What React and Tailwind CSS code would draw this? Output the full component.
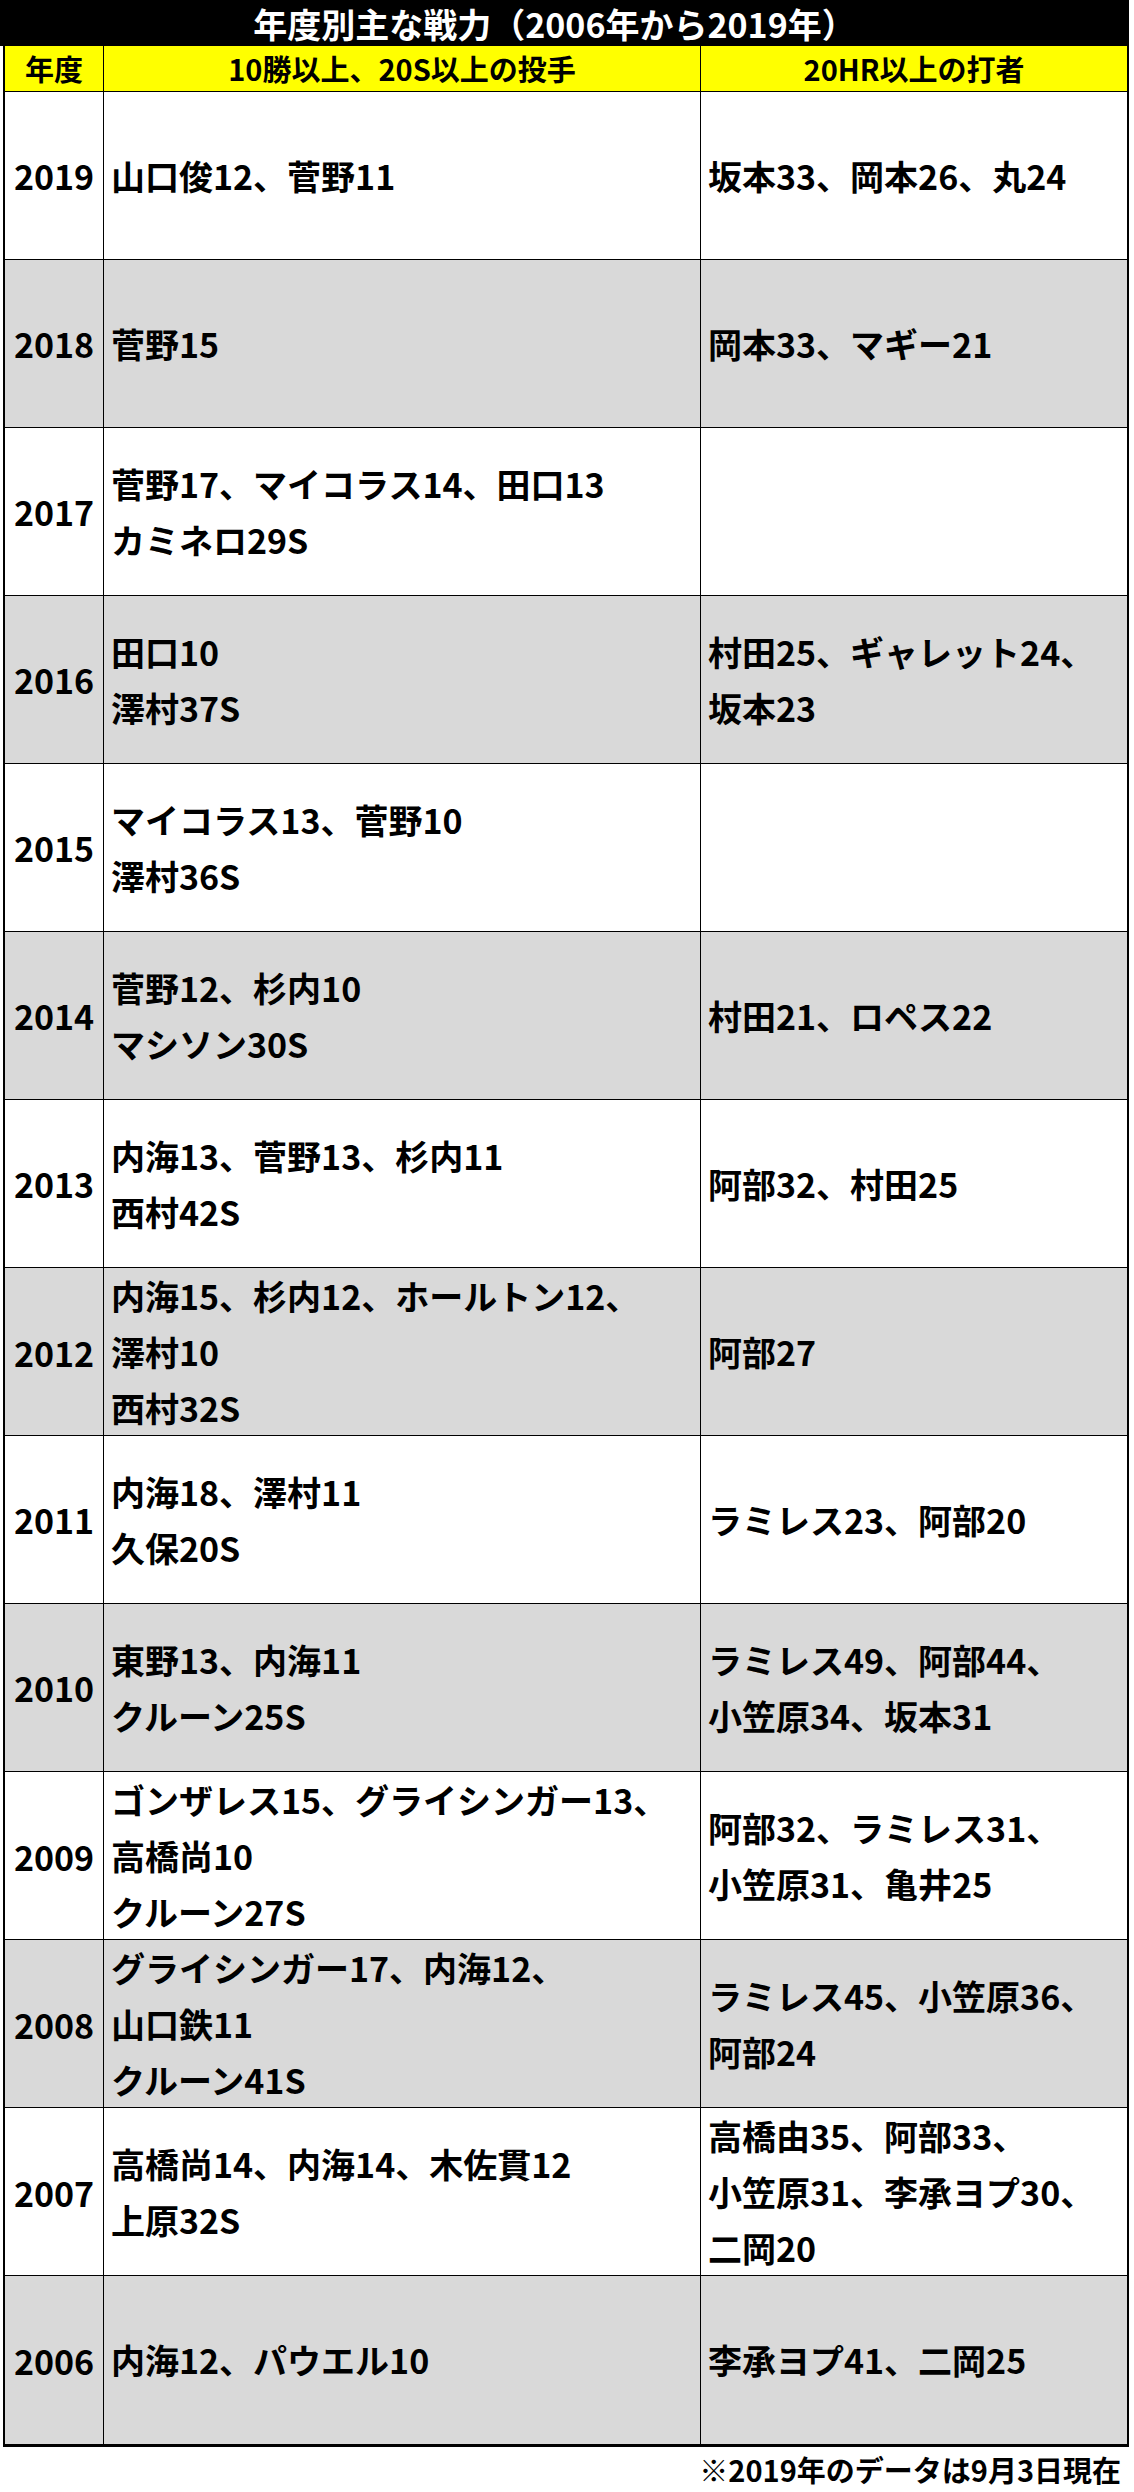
import React from 'react'

const rows = [
  { year: '2019', pitchers: ['山口俊12、菅野11'], batters: ['坂本33、岡本26、丸24'] },
  { year: '2018', pitchers: ['菅野15'], batters: ['岡本33、マギー21'] },
  { year: '2017', pitchers: ['菅野17、マイコラス14、田口13', 'カミネロ29S'], batters: [] },
  { year: '2016', pitchers: ['田口10', '澤村37S'], batters: ['村田25、ギャレット24、', '坂本23'] },
  { year: '2015', pitchers: ['マイコラス13、菅野10', '澤村36S'], batters: [] },
  { year: '2014', pitchers: ['菅野12、杉内10', 'マシソン30S'], batters: ['村田21、ロペス22'] },
  { year: '2013', pitchers: ['内海13、菅野13、杉内11', '西村42S'], batters: ['阿部32、村田25'] },
  { year: '2012', pitchers: ['内海15、杉内12、ホールトン12、', '澤村10', '西村32S'], batters: ['阿部27'] },
  { year: '2011', pitchers: ['内海18、澤村11', '久保20S'], batters: ['ラミレス23、阿部20'] },
  { year: '2010', pitchers: ['東野13、内海11', 'クルーン25S'], batters: ['ラミレス49、阿部44、', '小笠原34、坂本31'] },
  { year: '2009', pitchers: ['ゴンザレス15、グライシンガー13、', '高橋尚10', 'クルーン27S'], batters: ['阿部32、ラミレス31、', '小笠原31、亀井25'] },
  { year: '2008', pitchers: ['グライシンガー17、内海12、', '山口鉄11', 'クルーン41S'], batters: ['ラミレス45、小笠原36、', '阿部24'] },
  { year: '2007', pitchers: ['高橋尚14、内海14、木佐貫12', '上原32S'], batters: ['高橋由35、阿部33、', '小笠原31、李承ヨプ30、', '二岡20'] },
  { year: '2006', pitchers: ['内海12、パウエル10'], batters: ['李承ヨプ41、二岡25'] },
]

function Lines({ lines }) {
  return (
    <div className="flex flex-col">
      {lines.map((l) => (
        <div key={l} className="leading-[56px] whitespace-nowrap">{l}</div>
      ))}
    </div>
  )
}

export default function App() {
  return (
    <div className="w-[1134px] bg-white text-black font-bold font-['Noto_Sans_CJK_JP','Noto_Sans',sans-serif]">
      <div className="w-[1129px] h-[46px] bg-black text-white text-[34px] flex items-center justify-center pr-[20px]">
        年度別主な戦力（2006年から2019年）
      </div>

      <div className="ml-[3px] w-[1126px] border-x-2 border-b-[3px] border-black">
        <div className="grid grid-cols-[99px_597px_1fr] h-[46px] bg-[#ffff00] text-[29px] border-b border-black">
          <div className="flex items-center justify-center border-r border-black">年度</div>
          <div className="flex items-center justify-center border-r border-black">10勝以上、20S以上の投手</div>
          <div className="flex items-center justify-center">20HR以上の打者</div>
        </div>

        {rows.map((r, i) => (
          <div
            key={r.year}
            className={
              'grid grid-cols-[99px_597px_1fr] h-[168px] text-[34px] ' +
              (i % 2 === 1 ? 'bg-[#d9d9d9] ' : 'bg-white ') +
              (i < rows.length - 1 ? 'border-b border-black' : '')
            }
          >
            <div className="flex items-center justify-center border-r border-black">{r.year}</div>
            <div className="flex items-center pl-[7px] border-r border-black">
              <Lines lines={r.pitchers} />
            </div>
            <div className="flex items-center pl-[7px]">
              <Lines lines={r.batters} />
            </div>
          </div>
        ))}
      </div>

      <div className="w-[1129px] h-[45px] flex items-center justify-end pr-[8px] text-[29px]">
        ※2019年のデータは9月3日現在
      </div>
    </div>
  )
}
